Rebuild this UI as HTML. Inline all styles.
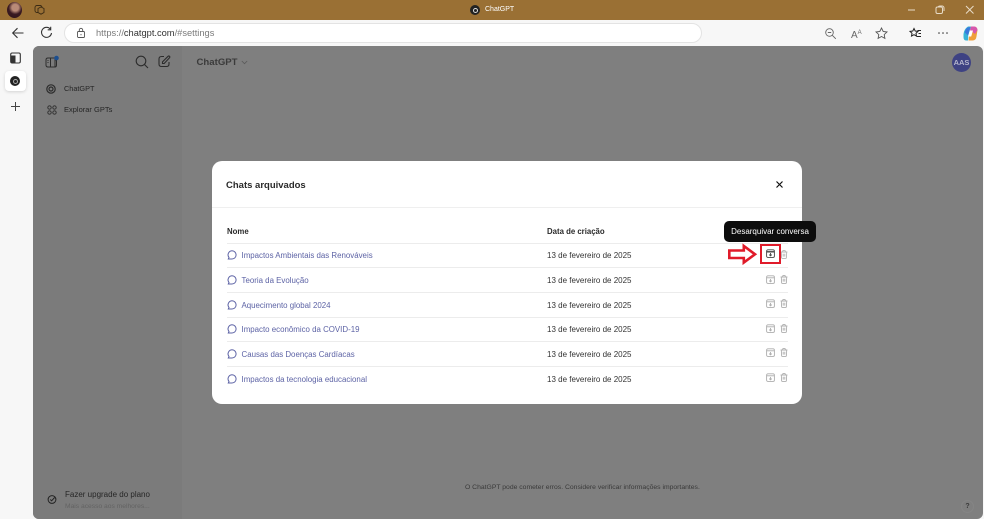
<!DOCTYPE html>
<html lang="pt">
<head>
<meta charset="utf-8">
<style>
html,body{margin:0;padding:0}
body{position:relative;width:984px;height:519px;overflow:hidden;background:#f7f7f7;font-family:"Liberation Sans",sans-serif;color:#222;filter:blur(.3px)}
.a{position:absolute}
svg{position:absolute;overflow:visible;fill:none}
.t{position:absolute;white-space:nowrap}
.row-line{position:absolute;left:227px;width:561px;height:1px;background:#ececec}
.link{position:absolute;left:241.5px;font-size:7.9px;color:#5d63a5;white-space:nowrap;line-height:12px}
.date{position:absolute;left:547px;font-size:8px;color:#333;white-space:nowrap;line-height:12px}
</style>
</head>
<body>
<!-- title bar -->
<div class="a" style="left:0;top:0;width:984px;height:20px;background:#9a7034"></div>
<div class="a" style="left:7px;top:2px;width:15px;height:16px;border-radius:50%;background:radial-gradient(circle at 55% 35%,#b98a78 0 25%,#3a1a22 50%,#2b1219 100%)"></div>
<svg style="left:34px;top:4px" width="12" height="12" viewBox="0 0 12 12" stroke="#3a2a14" stroke-width=".9"><rect x="1" y="1.5" width="7" height="7" rx="2"/><path d="M4 4.5l3-1.5 3 1.500v4l-3 1.700-3-1.700z" fill="#9a7034"/></svg>
<div class="a" style="left:470px;top:5px;width:10px;height:10px;border-radius:50%;background:#222"></div>
<div class="a" style="left:472.5px;top:7.5px;width:3px;height:3px;border-radius:50%;border:1px solid #ddd"></div>
<div class="t" style="left:485px;top:4px;font-size:7px;line-height:12px;color:#fff">ChatGPT</div>
<svg style="left:907px;top:6px" width="70" height="12" viewBox="0 0 70 12" stroke="#e8dcc8" stroke-width="1"><path d="M1 4h7"/><rect x="29" y="1" width="6.5" height="6.5" rx="1.5"/><path d="M31 1a2 2 0 0 1 2-1h2a2 2 0 0 1 2 2v3"/><path d="M59 0l7.500 7.500M66.500 0L59 7.500"/></svg>

<!-- toolbar -->
<div class="a" style="left:0;top:20px;width:984px;height:26px;background:#f7f7f7"></div>
<svg style="left:11px;top:26px" width="14" height="14" viewBox="0 0 14 14" stroke="#333" stroke-width="1.1"><path d="M12.500 7H2M6.500 2.200L1.700 7l4.800 4.800"/></svg>
<svg style="left:40px;top:26px" width="13" height="14" viewBox="0 0 13 14" stroke="#333" stroke-width="1.1"><path d="M10.500 3.300A5 5 0 1 0 11.500 7"/><path d="M10.700 .8v3h-3"/></svg>
<div class="a" style="left:64px;top:23px;width:638px;height:20px;background:#fff;border:1px solid #e3e3e3;border-radius:11px;box-sizing:border-box"></div>
<svg style="left:76px;top:27px" width="10" height="12" viewBox="0 0 10 12" stroke="#555" stroke-width=".9"><rect x="1.500" y="4.500" width="7" height="6" rx="1"/><path d="M3.300 4.500V3a1.700 1.700 0 0 1 3.400 0v1.500"/><path d="M5 7v1.300"/></svg>
<div class="t" style="left:96px;top:27px;font-size:9.300px;line-height:12px;color:#7a7a7a">https://<span style="color:#333">chatgpt.com</span>/#settings</div>
<svg style="left:825px;top:28px" width="12" height="12" viewBox="0 0 12 12" stroke="#666" stroke-width=".9"><circle cx="4.500" cy="4.500" r="3.800"/><path d="M7.300 7.300l3.500 3.500M2.800 4.500h3.400"/></svg>
<div class="t" style="left:851px;top:27px;font-size:10px;line-height:12px;color:#666">A<span style="font-size:6px;vertical-align:4px">A</span></div>
<svg style="left:875px;top:27px" width="13" height="13" viewBox="0 0 13 13" stroke="#555" stroke-width=".9"><path d="M6.500 1l1.700 3.500 3.800.5-2.800 2.600.7 3.800-3.400-1.900-3.400 1.900.7-3.800L1 5l3.800-.5z"/></svg>
<svg style="left:909px;top:27px" width="13" height="13" viewBox="0 0 13 13" stroke="#222" stroke-width="1"><path d="M5 1.500l1.200 2.500 2.800.4-2 1.900.5 2.800L5 7.700 2.500 9.100 3 6.300 1 4.400l2.800-.4z"/><path d="M8.500 3.500h3.500M9.500 6.500h2.500M7.500 9.500h4.500"/></svg>
<svg style="left:938px;top:32px" width="10" height="2" viewBox="0 0 10 2"><circle cx="1" cy="1" r=".8" fill="#333"/><circle cx="5" cy="1" r=".8" fill="#333"/><circle cx="9" cy="1" r=".8" fill="#333"/></svg>
<svg style="left:963px;top:26px" width="15" height="15" viewBox="0 0 15 15"><path d="M5 .5h3L5.500 9 5 14.500H3Q.5 14.500.5 11V8Q1 3 5 .5z" fill="#37b3d6"/><path d="M4.500 1.500Q2.500 3 1.800 6.500L5 9.500 7.500 1z" fill="#3a78dc"/><path d="M8 .5h3q3 0 3.500 3.500l-1 6.500Q13 14.500 9.500 14.500H5.500L6 11z" fill="#ef9f3a"/><path d="M8 .5h3q3 0 3.500 3.500L12 8 7 4z" fill="#d756ad"/><path d="M6.800 4.500h3.200L8.200 10.500H5z" fill="#fff"/></svg>

<!-- edge sidebar -->
<svg style="left:10px;top:52px" width="11" height="12" viewBox="0 0 11 12"><rect x=".7" y="1" width="9.600" height="10" rx="1.500" stroke="#333" stroke-width="1.100"/><rect x="1" y="3.500" width="4.500" height="7" fill="#333"/></svg>
<div class="a" style="left:5px;top:71px;width:21px;height:20px;background:#fff;border-radius:4px;box-shadow:0 1px 3px rgba(0,0,0,.15)"></div>
<div class="a" style="left:10px;top:76px;width:10px;height:10px;border-radius:50%;background:#222"></div>
<div class="a" style="left:12.500px;top:78.500px;width:3px;height:3px;border-radius:50%;border:1px solid #aaa"></div>
<svg style="left:10px;top:101px" width="11" height="11" viewBox="0 0 11 11" stroke="#444" stroke-width="1"><path d="M5.500 1v9M1 5.500h9"/></svg>

<!-- page (dimmed) -->
<div class="a" style="left:33px;top:46px;width:950px;height:473px;background:#7f7f7f;border-radius:6px;overflow:hidden">
  <div class="a" style="left:0;top:0;width:149px;height:473px;background:#7b7b7b"></div>
</div>
<svg style="left:45px;top:55px" width="16" height="14" viewBox="0 0 16 14" stroke="#2c2c2c" stroke-width="1"><path d="M3 3h7v9H3Q1 12 1 10V5Q1 3 3 3zM5.500 3v9M10 5h1.500v5q0 2-1.500 2"/><path d="M2.500 5.500h1M2.500 7.500h1"/><circle cx="11.500" cy="3" r="2.300" fill="#1d4f8f" stroke="none"/></svg>
<svg style="left:135px;top:55px" width="14" height="14" viewBox="0 0 14 14" stroke="#2c2c2c" stroke-width="1.100"><circle cx="6" cy="6" r="4.800"/><path d="M9.500 9.500l3.500 3.500"/></svg>
<svg style="left:158px;top:55px" width="13" height="13" viewBox="0 0 13 13" stroke="#2c2c2c" stroke-width="1.100"><path d="M6 1.500H3.500q-2.500 0-2.500 2.500v5q0 2.500 2.500 2.500h5q2.500 0 2.500-2.500V7"/><path d="M4.500 8.500V6.800l5.500-5.500q.8-.6 1.500 0t0 1.500L6.200 8.500z"/></svg>
<div class="t" style="left:196.500px;top:55.500px;font-size:9.600px;line-height:14px;font-weight:bold;color:#3b3b3b">ChatGPT</div>
<svg style="left:241px;top:60px" width="7" height="5" viewBox="0 0 7 5" stroke="#5a5a5a" stroke-width=".8"><path d="M.8 1l2.700 2.700L6.200 1"/></svg>
<div class="a" style="left:952px;top:53px;width:19px;height:19px;border-radius:50%;background:#3e4283;color:#b5b6cc;font-size:7.500px;font-weight:bold;line-height:19px;text-align:center">AAS</div>

<svg style="left:46px;top:84px" width="10" height="10" viewBox="0 0 10 10" stroke="#2c2c2c"><circle cx="5" cy="5" r="4.200" stroke-width="1.200"/><circle cx="5" cy="5" r="2" stroke-width="1.200"/></svg>
<div class="t" style="left:64px;top:83px;font-size:7.300px;line-height:12px;color:#262626">ChatGPT</div>
<svg style="left:47px;top:105px" width="10" height="10" viewBox="0 0 10 10" stroke="#2c2c2c" stroke-width=".9"><circle cx="2.500" cy="2.500" r="1.700"/><circle cx="7.500" cy="2.500" r="1.700"/><circle cx="2.500" cy="7.500" r="1.700"/><circle cx="7.500" cy="7.500" r="1.700"/></svg>
<div class="t" style="left:64px;top:104px;font-size:7.500px;line-height:12px;color:#262626">Explorar GPTs</div>

<svg style="left:47px;top:494px" width="10" height="11" viewBox="0 0 10 11" stroke="#222" stroke-width="1"><circle cx="5" cy="5.500" r="3.900"/><path d="M3.300 5.500l1.300 1.300 3-3.300"/></svg>
<div class="t" style="left:65px;top:489px;font-size:8px;line-height:12px;color:#262626">Fazer upgrade do plano</div>
<div class="t" style="left:65px;top:501px;font-size:6.700px;line-height:11px;color:#636363">Mais acesso aos melhores...</div>
<div class="t" style="left:465px;top:482px;font-size:6.800px;line-height:11px;color:#3a3a3a">O ChatGPT pode cometer erros. Considere verificar informações importantes.</div>
<div class="a" style="left:961px;top:500px;width:13px;height:13px;border-radius:50%;border:1px solid #858585;box-sizing:border-box;font-size:7px;line-height:12px;font-weight:bold;color:#3a3a3a;text-align:center">?</div>

<!-- modal -->
<div class="a" style="left:212px;top:161px;width:590px;height:243px;background:#fff;border-radius:10px"></div>
<div class="t" style="left:226px;top:178px;font-size:9.500px;line-height:15px;font-weight:bold;color:#2a2a2a">Chats arquivados</div>
<svg style="left:776px;top:181px" width="7" height="7" viewBox="0 0 7 7" stroke="#111" stroke-width="1.200"><path d="M.5.500l6 6M6.500.500l-6 6"/></svg>
<div class="a" style="left:212px;top:207px;width:590px;height:1px;background:#efefef"></div>
<div class="t" style="left:227px;top:226px;font-size:7.800px;line-height:12px;font-weight:bold;color:#2a2a2a">Nome</div>
<div class="t" style="left:547px;top:226px;font-size:7.800px;line-height:12px;font-weight:bold;color:#2a2a2a">Data de criação</div>

<div class="row-line" style="top:243px"></div>
<div class="row-line" style="top:267px"></div>
<div class="row-line" style="top:292px"></div>
<div class="row-line" style="top:317px"></div>
<div class="row-line" style="top:341px"></div>
<div class="row-line" style="top:366px"></div>

<!-- chat icons -->
<svg style="left:227px;top:250px" width="10" height="10" viewBox="0 0 10 10" stroke="#5d63a5" stroke-width="1"><path d="M5 .8a4.100 4.100 0 0 1 0 8.200H1.300l.7-1.500A4.100 4.100 0 0 1 5 .8z"/></svg>
<svg style="left:227px;top:275px" width="10" height="10" viewBox="0 0 10 10" stroke="#5d63a5" stroke-width="1"><path d="M5 .8a4.100 4.100 0 0 1 0 8.200H1.300l.7-1.500A4.100 4.100 0 0 1 5 .8z"/></svg>
<svg style="left:227px;top:300px" width="10" height="10" viewBox="0 0 10 10" stroke="#5d63a5" stroke-width="1"><path d="M5 .8a4.100 4.100 0 0 1 0 8.200H1.300l.7-1.500A4.100 4.100 0 0 1 5 .8z"/></svg>
<svg style="left:227px;top:324px" width="10" height="10" viewBox="0 0 10 10" stroke="#5d63a5" stroke-width="1"><path d="M5 .8a4.100 4.100 0 0 1 0 8.200H1.300l.7-1.500A4.100 4.100 0 0 1 5 .8z"/></svg>
<svg style="left:227px;top:349px" width="10" height="10" viewBox="0 0 10 10" stroke="#5d63a5" stroke-width="1"><path d="M5 .8a4.100 4.100 0 0 1 0 8.200H1.300l.7-1.500A4.100 4.100 0 0 1 5 .8z"/></svg>
<svg style="left:227px;top:374px" width="10" height="10" viewBox="0 0 10 10" stroke="#5d63a5" stroke-width="1"><path d="M5 .8a4.100 4.100 0 0 1 0 8.200H1.300l.7-1.500A4.100 4.100 0 0 1 5 .8z"/></svg>

<div class="link" style="top:249.500px">Impactos Ambientais das Renováveis</div>
<div class="link" style="top:274.500px">Teoria da Evolução</div>
<div class="link" style="top:299.500px">Aquecimento global 2024</div>
<div class="link" style="top:323.500px">Impacto econômico da COVID-19</div>
<div class="link" style="top:348.500px">Causas das Doenças Cardíacas</div>
<div class="link" style="top:373.500px">Impactos da tecnologia educacional</div>

<div class="date" style="top:249.500px">13 de fevereiro de 2025</div>
<div class="date" style="top:274.500px">13 de fevereiro de 2025</div>
<div class="date" style="top:299.500px">13 de fevereiro de 2025</div>
<div class="date" style="top:323.500px">13 de fevereiro de 2025</div>
<div class="date" style="top:348.500px">13 de fevereiro de 2025</div>
<div class="date" style="top:373.500px">13 de fevereiro de 2025</div>

<!-- action icons -->
<svg style="left:766px;top:249px" width="9" height="9" viewBox="0 0 9 9" stroke="#444" stroke-width=".9"><rect x=".6" y=".8" width="7.800" height="7.600" rx="1.300"/><path d="M.6 2.800h7.800" stroke-width="1.400"/><path d="M4.500 4v2.800M3.200 5.600l1.300 1.300 1.300-1.300"/></svg>
<svg style="left:780px;top:250px" width="8" height="9" viewBox="0 0 8 9" stroke="#b5b5b5" stroke-width=".9"><path d="M.6 2h6.800M2.700 2V1q0-.4.4-.4h1.800q.4 0 .4.400V2M1.300 2l.3 5.500q0 .9.900.9h3q.9 0 .9-.9L6.700 2M3.200 3.800v2.800M4.800 3.800v2.800"/></svg>
<svg style="left:766px;top:275px" width="9" height="9" viewBox="0 0 9 9" stroke="#adadad" stroke-width=".9"><rect x=".6" y=".8" width="7.800" height="7.600" rx="1.300"/><path d="M.6 2.800h7.800"/><path d="M4.500 4v2.800M3.200 5.600l1.300 1.300 1.300-1.300"/></svg>
<svg style="left:780px;top:275px" width="8" height="9" viewBox="0 0 8 9" stroke="#adadad" stroke-width=".9"><path d="M.6 2h6.800M2.700 2V1q0-.4.4-.4h1.800q.4 0 .4.400V2M1.300 2l.3 5.500q0 .9.900.9h3q.9 0 .9-.9L6.700 2M3.200 3.800v2.800M4.800 3.800v2.800"/></svg>
<svg style="left:766px;top:299px" width="9" height="9" viewBox="0 0 9 9" stroke="#adadad" stroke-width=".9"><rect x=".6" y=".8" width="7.800" height="7.600" rx="1.300"/><path d="M.6 2.800h7.800"/><path d="M4.500 4v2.800M3.200 5.600l1.300 1.300 1.300-1.300"/></svg>
<svg style="left:780px;top:299px" width="8" height="9" viewBox="0 0 8 9" stroke="#adadad" stroke-width=".9"><path d="M.6 2h6.800M2.700 2V1q0-.4.4-.4h1.800q.4 0 .4.400V2M1.300 2l.3 5.500q0 .9.900.9h3q.9 0 .9-.9L6.700 2M3.200 3.800v2.800M4.800 3.800v2.800"/></svg>
<svg style="left:766px;top:324px" width="9" height="9" viewBox="0 0 9 9" stroke="#adadad" stroke-width=".9"><rect x=".6" y=".8" width="7.800" height="7.600" rx="1.300"/><path d="M.6 2.800h7.800"/><path d="M4.500 4v2.800M3.200 5.600l1.300 1.300 1.300-1.300"/></svg>
<svg style="left:780px;top:324px" width="8" height="9" viewBox="0 0 8 9" stroke="#adadad" stroke-width=".9"><path d="M.6 2h6.800M2.700 2V1q0-.4.4-.4h1.800q.4 0 .4.400V2M1.300 2l.3 5.500q0 .9.900.9h3q.9 0 .9-.9L6.700 2M3.200 3.800v2.800M4.800 3.800v2.800"/></svg>
<svg style="left:766px;top:348px" width="9" height="9" viewBox="0 0 9 9" stroke="#adadad" stroke-width=".9"><rect x=".6" y=".8" width="7.800" height="7.600" rx="1.300"/><path d="M.6 2.800h7.800"/><path d="M4.500 4v2.800M3.200 5.600l1.300 1.300 1.300-1.300"/></svg>
<svg style="left:780px;top:348px" width="8" height="9" viewBox="0 0 8 9" stroke="#adadad" stroke-width=".9"><path d="M.6 2h6.800M2.700 2V1q0-.4.4-.4h1.800q.4 0 .4.400V2M1.300 2l.3 5.500q0 .9.900.9h3q.9 0 .9-.9L6.700 2M3.200 3.800v2.800M4.800 3.800v2.800"/></svg>
<svg style="left:766px;top:373px" width="9" height="9" viewBox="0 0 9 9" stroke="#adadad" stroke-width=".9"><rect x=".6" y=".8" width="7.800" height="7.600" rx="1.300"/><path d="M.6 2.800h7.800"/><path d="M4.500 4v2.800M3.200 5.600l1.300 1.300 1.300-1.300"/></svg>
<svg style="left:780px;top:373px" width="8" height="9" viewBox="0 0 8 9" stroke="#adadad" stroke-width=".9"><path d="M.6 2h6.800M2.700 2V1q0-.4.4-.4h1.800q.4 0 .4.400V2M1.300 2l.3 5.500q0 .9.900.9h3q.9 0 .9-.9L6.700 2M3.200 3.800v2.800M4.800 3.800v2.800"/></svg>

<!-- tooltip -->
<div class="a" style="left:724px;top:221px;width:92px;height:21px;background:#0d0d0d;border-radius:5px;color:#fff;font-size:8px;line-height:21px;text-align:center;white-space:nowrap">Desarquivar conversa</div>

<!-- red highlight -->
<div class="a" style="left:760px;top:244px;width:21px;height:20px;border:2.500px solid #e01b2a;box-sizing:border-box"></div>
<svg style="left:728px;top:244px" width="30" height="21" viewBox="0 0 30 21" stroke="#e01b2a" stroke-width="2.600" stroke-linejoin="miter"><path d="M1.300 6.500h14.500V2L27 10.300 15.800 18.600v-4.600H1.300z"/></svg>
</body>
</html>
